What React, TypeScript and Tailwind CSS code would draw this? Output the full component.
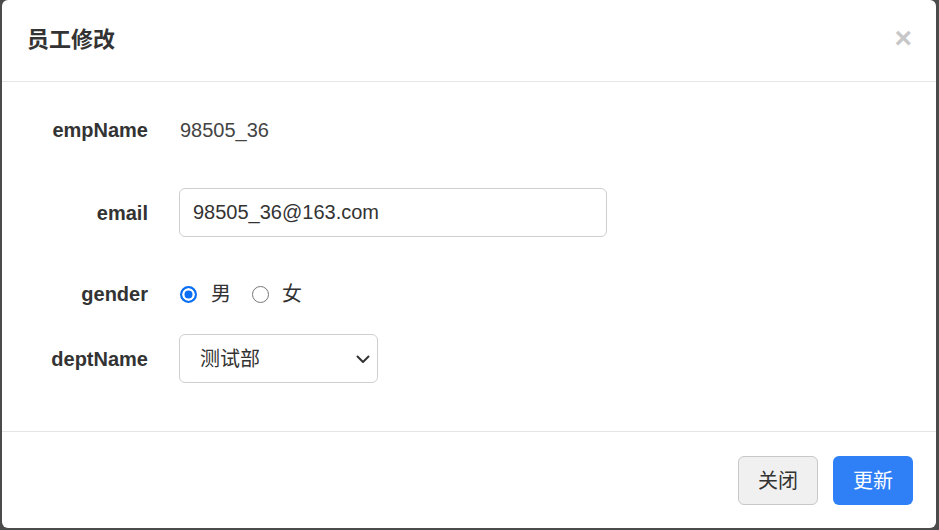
import { useState } from 'react';

const font = { fontFamily: '"Liberation Sans", Arial, "Noto Sans CJK SC", sans-serif' };

const radioCls =
  'appearance-none w-[17px] h-[17px] m-0 rounded-full border-[1.5px] border-[#767676] bg-white checked:border-2 checked:border-[#0b6ff5] checked:bg-[#0b6ff5] checked:shadow-[inset_0_0_0_2.5px_white]';

export default function App() {
  const [gender, setGender] = useState('M');
  const [email, setEmail] = useState('98505_36@163.com');
  const [dept, setDept] = useState('1');

  return (
    <div className="w-[939px] h-[530px] overflow-hidden bg-[#4b4b4b] pl-[2px] pr-[3px]" style={font}>
      <div className="w-[934px] h-[528px] bg-white rounded-[6px] flex flex-col text-[#333]">
        {/* header */}
        <div className="h-[82px] shrink-0 flex items-center justify-between pl-[25px] pr-[24px] border-b border-[#e5e5e5]">
          <h4 className="text-[22px] font-bold leading-none text-[#333] -mt-[2px]">员工修改</h4>
          <button className="text-[30px] font-bold leading-none text-[#c7c7c7] -mt-[6px]">×</button>
        </div>

        {/* body */}
        <div className="flex-1 flex flex-col text-[20px]">
          <div className="mt-[24px] h-[48px] flex items-center">
            <label className="w-[146px] text-right font-bold">empName</label>
            <span className="ml-[32px] text-[#444]">98505_36</span>
          </div>

          <div className="mt-[34px] h-[49px] flex items-center">
            <label className="w-[146px] text-right font-bold">email</label>
            <input
              value={email}
              onChange={e => setEmail(e.target.value)}
              className="ml-[31px] w-[428px] h-[49px] border border-[#cfcfcf] rounded-[6px] px-[13px] text-[20px] text-[#333] outline-none"
            />
          </div>

          <div className="mt-[42px] h-[30px] flex items-center">
            <label className="w-[146px] text-right font-bold">gender</label>
            <div className="ml-[32px] flex items-center">
              <label className="flex items-center">
                <input type="radio" name="gender" checked={gender === 'M'} onChange={() => setGender('M')} className={radioCls} />
                <span className="ml-[14px]">男</span>
              </label>
              <label className="flex items-center ml-[21px]">
                <input type="radio" name="gender" checked={gender === 'F'} onChange={() => setGender('F')} className={radioCls} />
                <span className="ml-[13px]">女</span>
              </label>
            </div>
          </div>

          <div className="mt-[25px] h-[49px] flex items-center">
            <label className="w-[146px] text-right font-bold">deptName</label>
            <div className="ml-[31px] relative">
              <select
                value={dept}
                onChange={e => setDept(e.target.value)}
                className="appearance-none w-[199px] h-[49px] border border-[#cfcfcf] rounded-[6px] pl-[20px] pr-[36px] text-[20px] text-[#333] bg-white outline-none"
              >
                <option value="1">测试部</option>
                <option value="2">开发部</option>
              </select>
              <svg className="absolute right-[7px] top-[17px] pointer-events-none" width="16" height="16" viewBox="0 0 16 16" fill="none">
                <path d="M2.5 5.5 8 11l5.5-5.5" stroke="#333" strokeWidth="2" strokeLinecap="round" strokeLinejoin="round" />
              </svg>
            </div>
          </div>
        </div>

        {/* footer */}
        <div className="h-[97px] shrink-0 border-t border-[#e5e5e5] flex items-start justify-end pt-[24px] pr-[23px] gap-[15px]">
          <button className="w-[80px] h-[49px] rounded-[6px] border border-[#c8c8c8] bg-[#f0f0f0] text-[20px] text-[#333]">关闭</button>
          <button className="w-[80px] h-[49px] rounded-[6px] bg-[#2f80f7] text-[20px] text-white">更新</button>
        </div>
      </div>
    </div>
  );
}
